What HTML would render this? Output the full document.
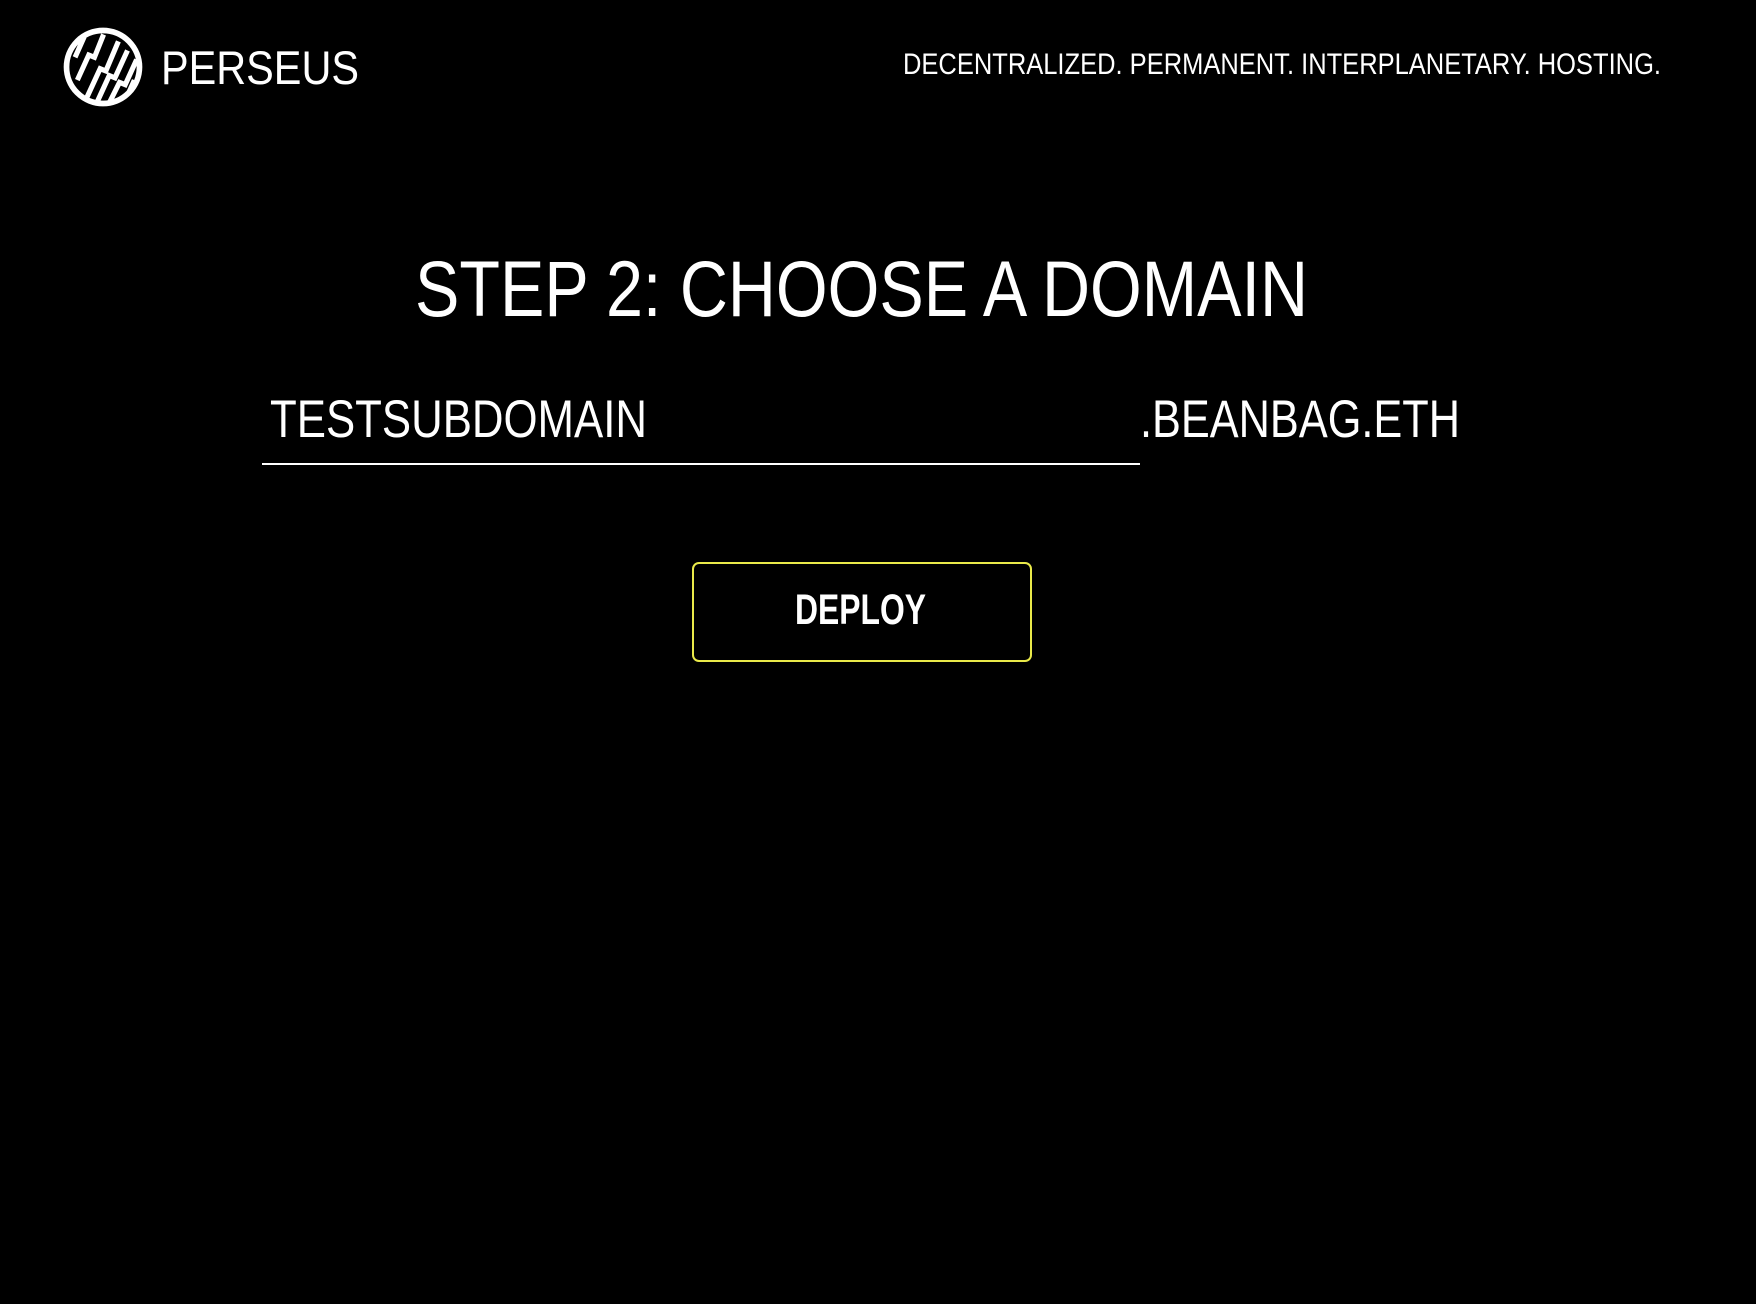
<!DOCTYPE html>
<html><head><style>
html,body{margin:0;padding:0;background:#000;width:1756px;height:1304px;overflow:hidden}
svg{display:block}
text{fill:#fff;font-family:"Liberation Sans",sans-serif}
</style></head><body>
<svg width="1756" height="1304" viewBox="0 0 1756 1304">
<defs><clipPath id="c"><circle cx="102.5" cy="68.5" r="30"/></clipPath></defs>
<g transform="translate(103 67) scale(1.14) translate(-102.5 -68.5)">
<circle cx="102.5" cy="68.5" r="32" fill="none" stroke="#fff" stroke-width="5"/>
<g clip-path="url(#c)" stroke="#fff" stroke-width="4.5" stroke-linecap="butt" fill="none">
<path d="M78 60 L86 42 M80 80 L90 58 L95 60 L103 40"/>
<path d="M88 96 L100 70 L105 72 L116 46"/>
<path d="M97 100 L108 76 L113 78 L124 54"/>
<path d="M108 100 L117 82 L122 84 L132 62"/>
<path d="M122 98 L130 80"/>
</g>
</g>
<text x="161" y="84" font-size="47" textLength="198" lengthAdjust="spacingAndGlyphs">PERSEUS</text>
<text x="903" y="74" font-size="30" textLength="758" lengthAdjust="spacingAndGlyphs">DECENTRALIZED. PERMANENT. INTERPLANETARY. HOSTING.</text>
<text x="415" y="316" font-size="79" textLength="893" lengthAdjust="spacingAndGlyphs">STEP 2: CHOOSE A DOMAIN</text>
<text x="270" y="437" font-size="53" textLength="377" lengthAdjust="spacingAndGlyphs">TESTSUBDOMAIN</text>
<text x="1140" y="437" font-size="53" textLength="320" lengthAdjust="spacingAndGlyphs">.BEANBAG.ETH</text>
<line x1="262" y1="464" x2="1140" y2="464" stroke="#fff" stroke-width="2"/>
<rect x="693" y="563" width="338" height="98" rx="6" fill="none" stroke="#eaea4a" stroke-width="2"/>
<text x="795" y="624" font-size="43" font-weight="bold" textLength="131" lengthAdjust="spacingAndGlyphs">DEPLOY</text>
</svg>
</body></html>
